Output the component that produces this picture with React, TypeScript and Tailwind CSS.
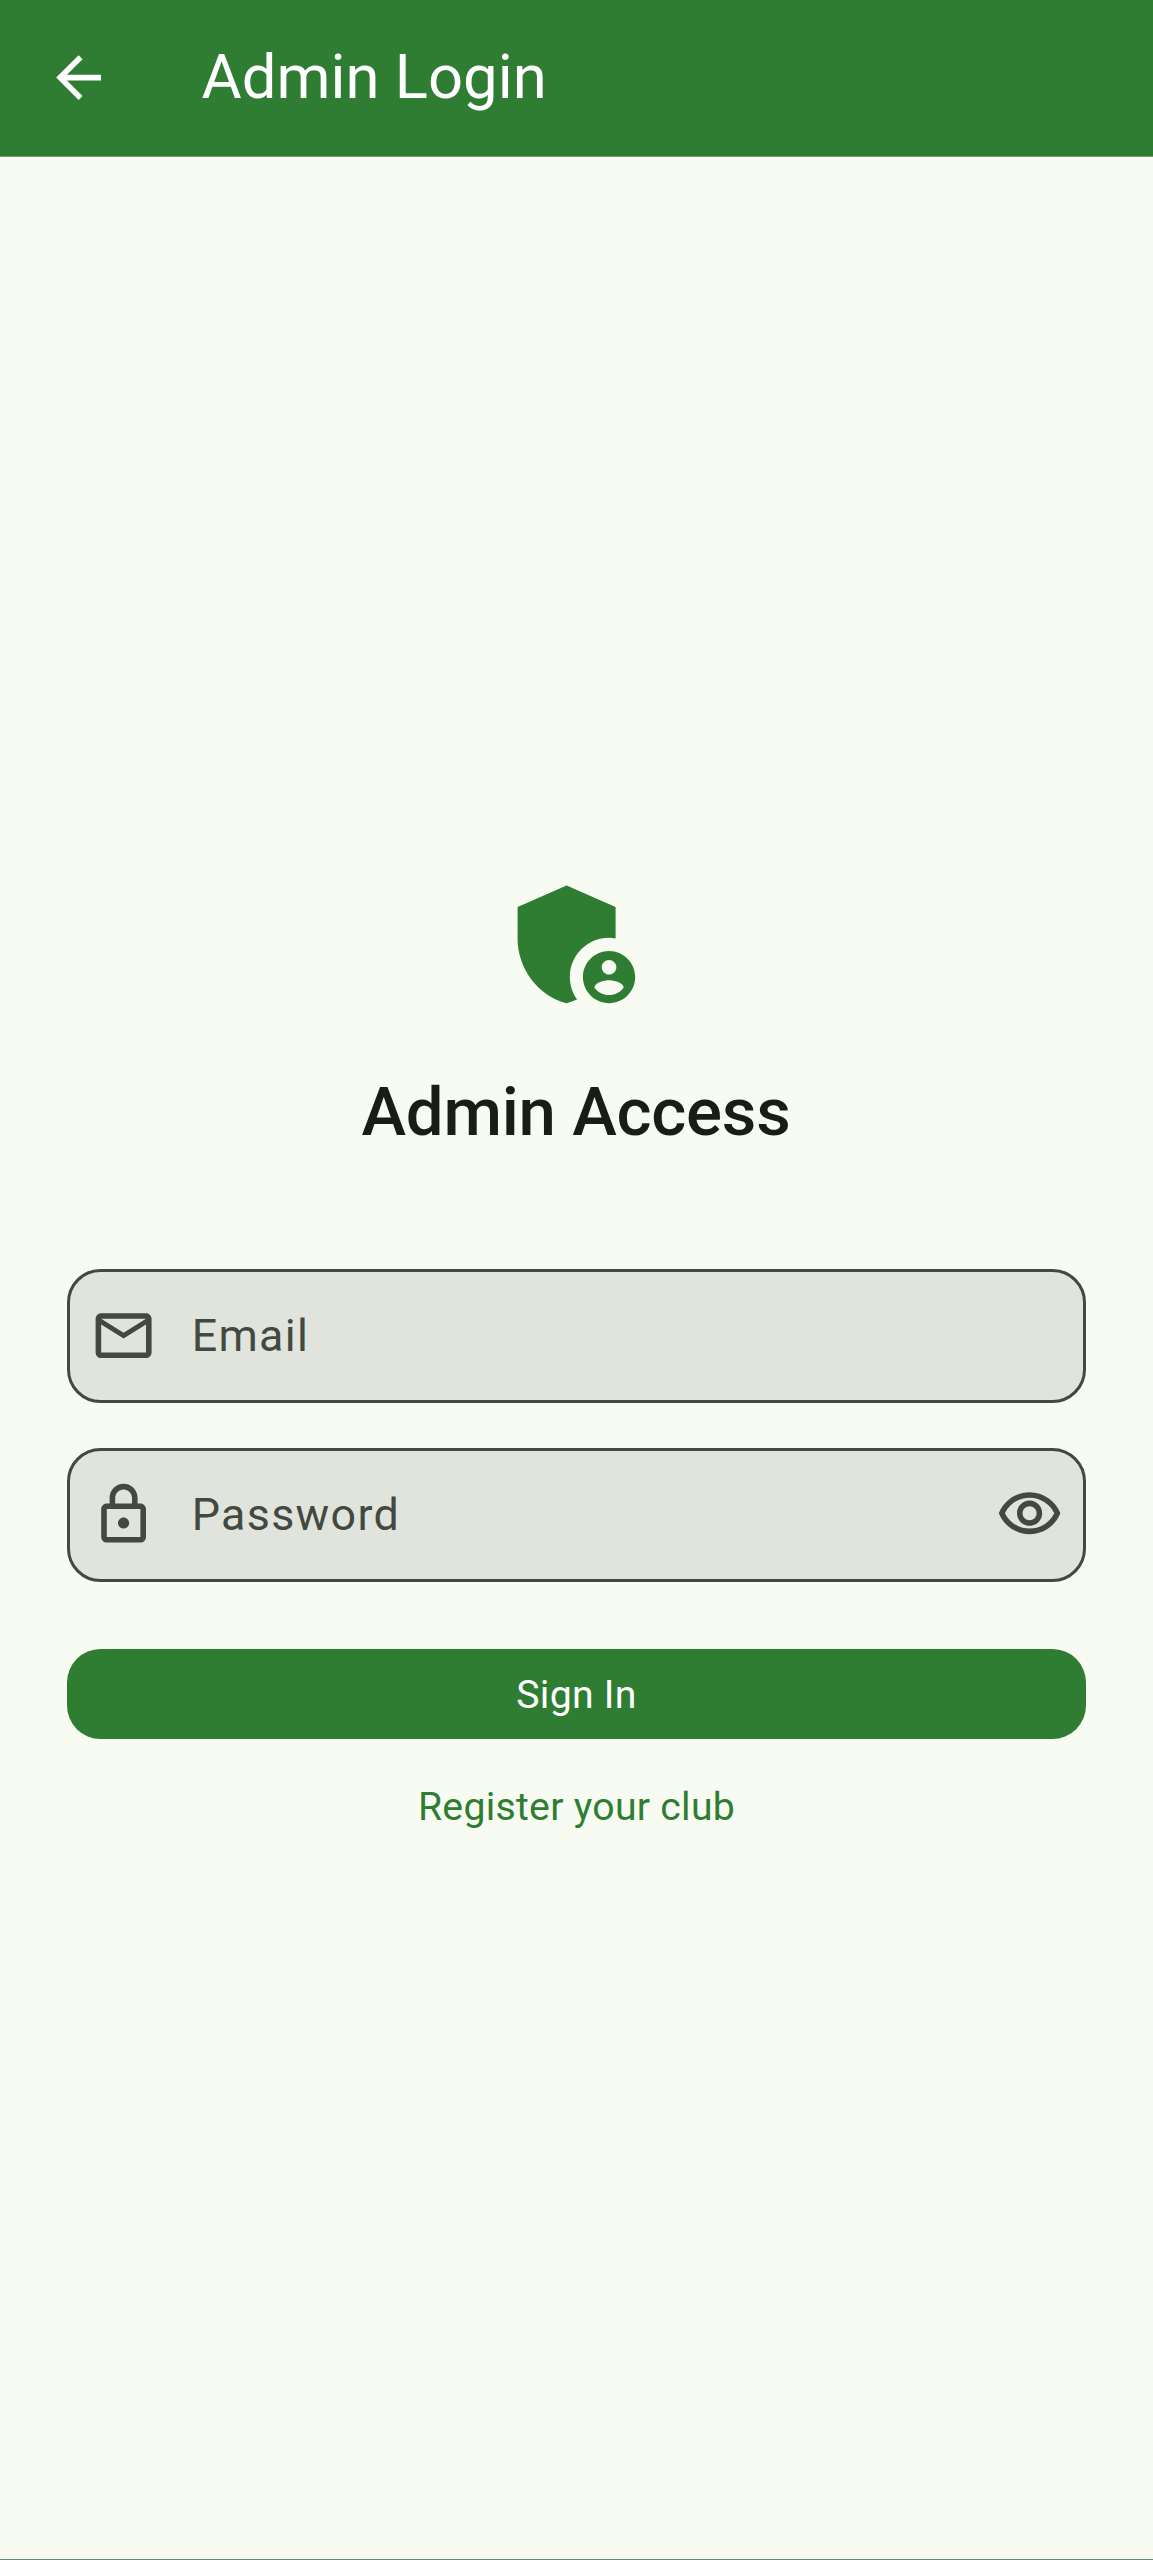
const FONT = "font-['Roboto','Liberation_Sans',sans-serif]";

function MailIcon() {
  return (
    <svg viewBox="0 0 24 24" className="w-[67.2px] h-[67.2px] shrink-0 fill-[#424940]">
      <path d="M22 6c0-1.1-.9-2-2-2H4c-1.1 0-2 .9-2 2v12c0 1.1.9 2 2 2h16c1.1 0 2-.9 2-2V6zm-2 0l-8 5-8-5h16zm0 12H4V8l8 5 8-5v10z" />
    </svg>
  );
}

function LockIcon() {
  return (
    <svg viewBox="0 0 24 24" className="w-[67.2px] h-[67.2px] shrink-0 fill-[#424940]">
      <path d="M18 8h-1V6c0-2.76-2.24-5-5-5S7 3.24 7 6v2H6c-1.1 0-2 .9-2 2v10c0 1.1.9 2 2 2h12c1.1 0 2-.9 2-2V10c0-1.1-.9-2-2-2zM9 6c0-1.66 1.34-3 3-3s3 1.34 3 3v2H9V6zm9 14H6V10h12v10zm-6-3c1.1 0 2-.9 2-2s-.9-2-2-2-2 .9-2 2 .9 2 2 2z" />
    </svg>
  );
}

function EyeIcon() {
  return (
    <svg viewBox="0 0 24 24" className="w-[67.2px] h-[67.2px] shrink-0 fill-[#424940]">
      <path d="M12 6c3.79 0 7.17 2.13 8.82 5.5C19.17 14.87 15.79 17 12 17s-7.17-2.13-8.82-5.5C4.83 8.13 8.21 6 12 6m0-2C7 4 2.73 7.11 1 11.5 2.73 15.89 7 19 12 19s9.27-3.11 11-7.5C21.27 7.11 17 4 12 4zm0 5c1.38 0 2.5 1.12 2.5 2.5S13.38 14 12 14s-2.5-1.12-2.5-2.5S10.62 9 12 9m0-2c-2.48 0-4.5 2.02-4.5 4.5S9.52 16 12 16s4.5-2.02 4.5-4.5S14.48 7 12 7z" />
    </svg>
  );
}

function Field({ label, icon, trailing }: { label: string; icon: React.ReactNode; trailing?: React.ReactNode }) {
  return (
    <div className="h-[134px] flex items-center rounded-[33.6px] border-[3px] border-[#424940] bg-[#e0e4dc] pl-[19.4px] pr-[19.4px]">
      {icon}
      <span className="ml-[35px] flex-1 text-[44.8px] leading-[67px] tracking-[1.3px] text-[#424940]">{label}</span>
      {trailing}
    </div>
  );
}

export default function App() {
  return (
    <div className={`${FONT} w-[1153px] h-[2560px] flex flex-col bg-[#f7fbf1]`}>
      <header className="h-[157px] shrink-0 flex items-center bg-[#2e7d32] border-b border-[#6fa373]">
        <svg viewBox="0 0 24 24" className="ml-[44.8px] w-[67.2px] h-[67.2px] shrink-0 fill-white">
          <path d="M20 11H7.83l5.59-5.59L12 4l-8 8 8 8 1.41-1.41L7.83 13H20v-2z" />
        </svg>
        <h1 className="ml-[89.6px] pb-[2px] text-[61.6px] leading-[78px] font-normal text-white">Admin Login</h1>
      </header>

      <main className="flex-1 flex flex-col px-[67.2px] pt-[709px]">
        <svg viewBox="0 0 24 24" className="self-center w-[156.8px] h-[156.8px] fill-[#2e7d32]">
          <path d="M17 11c.34 0 .67.04 1 .09V6.27L10.5 3 3 6.27v4.91c0 4.54 3.2 8.79 7.5 9.82.55-.13 1.08-.32 1.6-.55-.69-.98-1.1-2.17-1.1-3.45 0-3.31 2.69-6 6-6z" />
          <path d="M17 13c-2.21 0-4 1.79-4 4s1.79 4 4 4 4-1.79 4-4-1.79-4-4-4zm0 1.38c.62 0 1.12.51 1.12 1.12s-.51 1.12-1.12 1.12-1.12-.51-1.12-1.12.5-1.12 1.12-1.12zm0 5.37c-.93 0-1.74-.46-2.24-1.17.05-.72 1.51-1.08 2.24-1.08s2.19.36 2.24 1.08c-.5.71-1.31 1.17-2.24 1.17z" />
        </svg>
        <h2 className="mt-[45px] mb-[111.6px] pr-[1px] text-center text-[67.2px] leading-[89.6px] font-medium tracking-[-0.25px] text-[#191d17]">Admin Access</h2>

        <div className="flex flex-col gap-[45px]">
          <Field label="Email" icon={<MailIcon />} />
          <Field label="Password" icon={<LockIcon />} trailing={<EyeIcon />} />
        </div>

        <button className="mt-[67px] h-[90px] pt-[3px] rounded-[33.6px] bg-[#2e7d32] text-white text-[39.2px] font-normal tracking-[0.28px]">Sign In</button>
        <a className="mt-[40px] text-center text-[39.2px] leading-[56px] font-normal tracking-[0.28px] text-[#2e7d32]">Register your club</a>
      </main>

      <div className="h-px shrink-0 bg-[#5f9265]" />
    </div>
  );
}
